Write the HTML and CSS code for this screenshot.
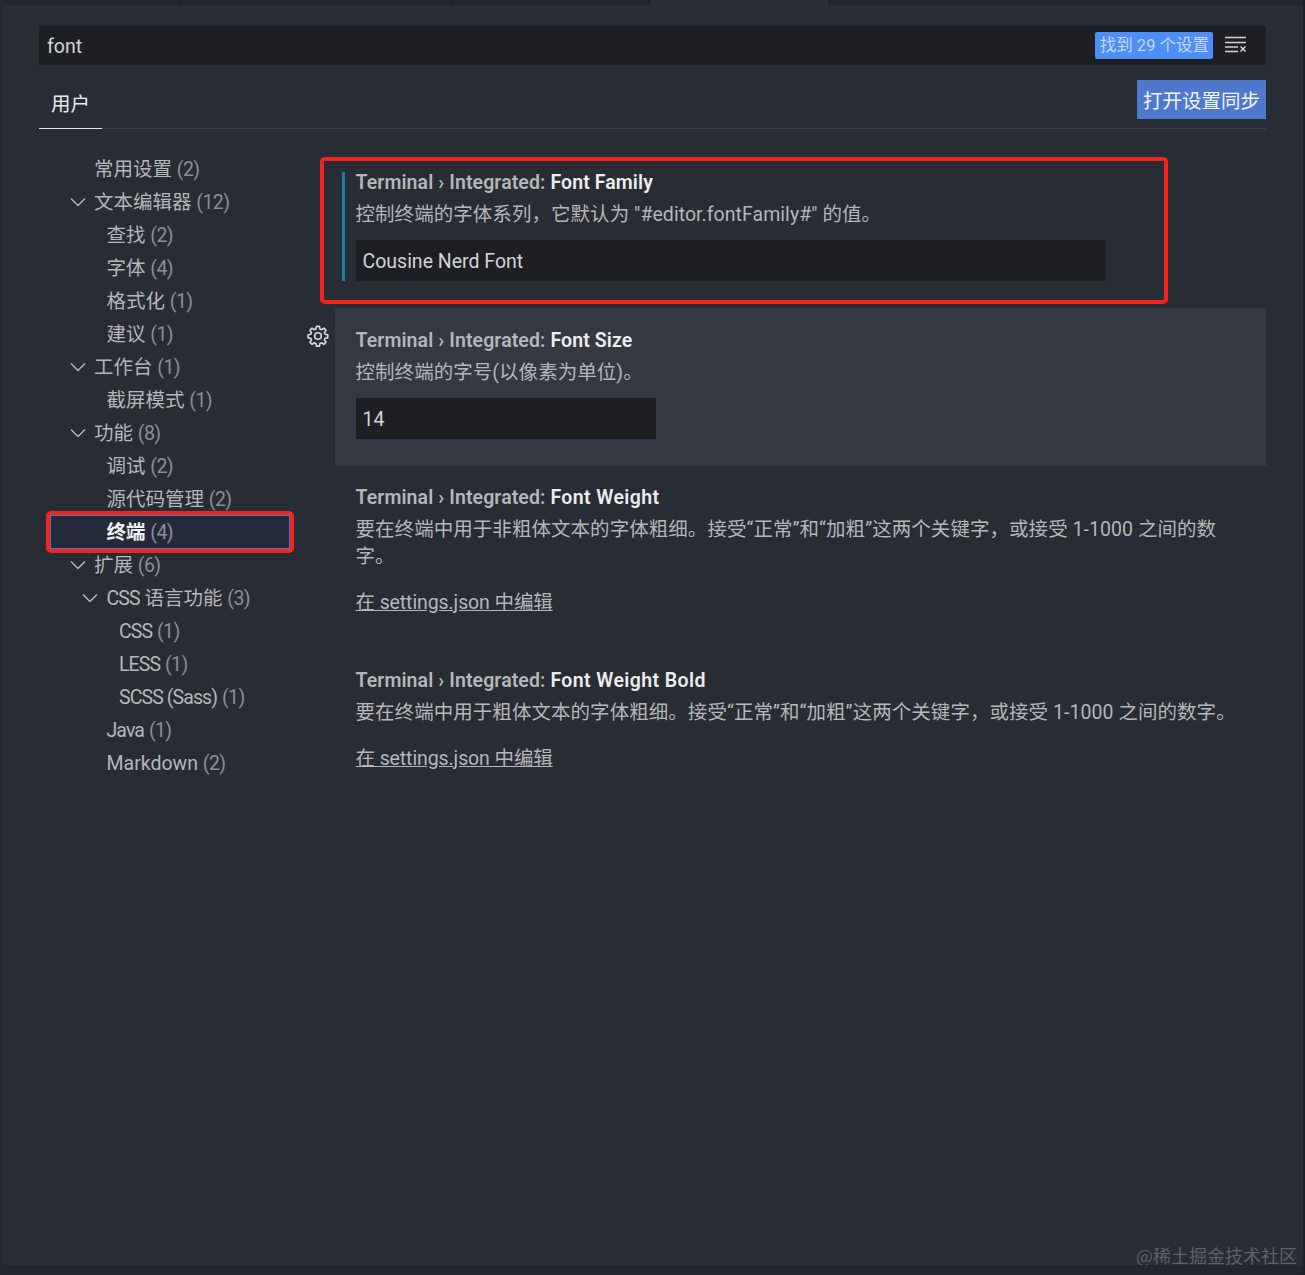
FILE: index.html
```html
<!DOCTYPE html>
<html lang="zh">
<head>
<meta charset="utf-8">
<title>Settings</title>
<link rel="stylesheet" href="styles.css">
</head>
<body>
<div class="tabstrip">
  <div class="tab t1"></div><div class="tab t2"></div><div class="tab t3"></div><div class="tab active"></div>
</div>
<main class="editor">
  <div class="search">
    <span class="query">font</span>
    <span class="count">找到 29 个设置</span>
    <svg class="clear" width="24" height="18" viewBox="0 0 24 18"><path d="M1 2.500h21M1 7.500h21M1 12h13M1 16.500h13" stroke="#d0d2d4" stroke-width="1.500" fill="none"/><path d="M16.500 11.500l5 5M21.500 11.500l-5 5" stroke="#d0d2d4" stroke-width="1.500" fill="none"/></svg>
  </div>
  <div class="tabs-row">
    <div class="user-tab">用户</div>
    <button class="sync">打开设置同步</button>
  </div>
  <div class="content">
    <nav class="tree">
      <div class="node l1"><span class="lab">常用设置</span> <span class="n">(2)</span></div>
      <div class="node l1"><svg class="chev" viewBox="0 0 16 16"><path d="M1 4.500l7 7 7-7"/></svg><span class="lab">文本编辑器</span> <span class="n">(12)</span></div>
      <div class="node l2"><span class="lab">查找</span> <span class="n">(2)</span></div>
      <div class="node l2"><span class="lab">字体</span> <span class="n">(4)</span></div>
      <div class="node l2"><span class="lab">格式化</span> <span class="n">(1)</span></div>
      <div class="node l2"><span class="lab">建议</span> <span class="n">(1)</span></div>
      <div class="node l1"><svg class="chev" viewBox="0 0 16 16"><path d="M1 4.500l7 7 7-7"/></svg><span class="lab">工作台</span> <span class="n">(1)</span></div>
      <div class="node l2"><span class="lab">截屏模式</span> <span class="n">(1)</span></div>
      <div class="node l1"><svg class="chev" viewBox="0 0 16 16"><path d="M1 4.500l7 7 7-7"/></svg><span class="lab">功能</span> <span class="n">(8)</span></div>
      <div class="node l2"><span class="lab">调试</span> <span class="n">(2)</span></div>
      <div class="node l2"><span class="lab">源代码管理</span> <span class="n">(2)</span></div>
      <div class="node l2 selected"><span class="lab">终端</span> <span class="n">(4)</span></div>
      <div class="node l1"><svg class="chev" viewBox="0 0 16 16"><path d="M1 4.500l7 7 7-7"/></svg><span class="lab">扩展</span> <span class="n">(6)</span></div>
      <div class="node l2"><svg class="chev" viewBox="0 0 16 16"><path d="M1 4.500l7 7 7-7"/></svg><span class="lab"><span class="tight">CSS</span> 语言功能</span> <span class="n">(3)</span></div>
      <div class="node l3"><span class="lab tight">CSS</span> <span class="n">(1)</span></div>
      <div class="node l3"><span class="lab tight">LESS</span> <span class="n">(1)</span></div>
      <div class="node l3"><span class="lab tight">SCSS (Sass)</span> <span class="n">(1)</span></div>
      <div class="node l2"><span class="lab tight">Java</span> <span class="n">(1)</span></div>
      <div class="node l2"><span class="lab">Markdown</span> <span class="n">(2)</span></div>
    </nav>
    <section class="settings">
      <article class="setting s1">
        <h3 class="title">Terminal › Integrated: <b>Font Family</b></h3>
        <p class="desc">控制终端的字体系列，它默认为 "#editor.fontFamily#" 的值。</p>
        <div class="input wide">Cousine Nerd Font</div>
      </article>
      <article class="setting s2 hovered">
        <svg class="gear" width="24" height="24" viewBox="0 0 24 24"><path d="M10.300 2.200h3.400l.5 2.900 1.800.7 2.400-1.700 2.400 2.400-1.700 2.400.7 1.800 2.900.5v3.400l-2.900.5-.7 1.800 1.700 2.400-2.400 2.400-2.400-1.700-1.800.7-.5 2.900h-3.400l-.5-2.900-1.800-.7-2.400 1.700-2.400-2.400 1.700-2.400-.7-1.800-2.900-.5v-3.400l2.900-.5.7-1.800-1.700-2.400 2.400-2.400 2.400 1.700 1.800-.7z" transform="translate(.9 .4) scale(.92)" fill="none" stroke="#d6d8da" stroke-width="1.800" stroke-linejoin="round"/><circle cx="12" cy="12" r="3.300" fill="none" stroke="#d6d8da" stroke-width="1.600"/></svg>
        <h3 class="title">Terminal › Integrated: <b>Font Size</b></h3>
        <p class="desc">控制终端的字号(以像素为单位)。</p>
        <div class="input narrow">14</div>
      </article>
      <article class="setting s3">
        <h3 class="title">Terminal › Integrated: <b class="wider">Font Weight</b></h3>
        <p class="desc">要在终端中用于非粗体文本的字体粗细。接受“正常”和“加粗”这两个关键字，或接受 1-1000 之间的数字。</p>
        <a class="edit">在 settings.json 中编辑</a>
      </article>
      <article class="setting s4">
        <h3 class="title">Terminal › Integrated: <b class="wider">Font Weight Bold</b></h3>
        <p class="desc">要在终端中用于粗体文本的字体粗细。接受“正常”和“加粗”这两个关键字，或接受 1-1000 之间的数字。</p>
        <a class="edit">在 settings.json 中编辑</a>
      </article>
    </section>
  </div>
</main>
<div class="mark box-a"></div>
<div class="mark box-b"></div>
<div class="watermark">@稀土掘金技术社区</div>
<div class="bottom"></div>
</body>
</html>
```
FILE: styles.css
```css
* { box-sizing: border-box; }
html, body { margin: 0; height: 100%; }
body {
  position: relative;
  width: 1305px;
  height: 1275px;
  overflow: hidden;
  background: #282c35;
  color: #b4b6b9;
  font-family: Roboto, "Noto Sans CJK SC", sans-serif;
  font-size: 19.500px;
  border-left: 2px solid #23262e;
  border-right: 2px solid #1d2026;
}
.tabstrip { display: flex; height: 5px; background: #22252c; }
.tab { height: 5px; border-right: 1px solid #191b20; }
.t1 { width: 178px; }
.t2 { width: 271px; margin-left: 1px; }
.t3 { width: 198px; }
.tab.active { width: 180px; background: #282c35; }
.editor { padding: 21px 37px 0 37px; }
.search {
  display: flex;
  align-items: center;
  height: 39px;
  padding: 0 18px 0 8px;
  background: #1d1f24;
}
.query { flex: 1; padding-top: 2px; color: #d3d4d6; font-size: 19.500px; }
.count {
  height: 27px;
  padding: 0 4px 0 5px;
  line-height: 27px;
  border-radius: 2px;
  background: #4d8ef7;
  color: #c6d9f7;
  font-size: 16.500px;
  white-space: nowrap;
}
.clear { margin: -3px 0 0 11px; flex: none; }
.tabs-row {
  display: flex;
  justify-content: space-between;
  height: 64px;
  border-bottom: 1px solid #3c404a;
}
.user-tab {
  width: 63px;
  height: 64px;
  padding: 26px 0 0 12px;
  border-bottom: 1px solid #e6e7e8;
  color: #e9eaeb;
  font-size: 19.500px;
  line-height: 27px;
}
.sync {
  width: 129px;
  height: 39px;
  margin-top: 15px;
  padding: 0;
  border: 0;
  background: #4e78cc;
  color: #f2f5fb;
  font: inherit;
  font-size: 19.500px;
}
.content { display: flex; padding-top: 23px; }
.tree { width: 296px; flex: none; }
.node {
  position: relative;
  height: 33px;
  line-height: 35px;
  white-space: nowrap;
  color: #b4b6b9;
}
.node .n { color: #8b8e93; letter-spacing: -.6px; }
.tight { letter-spacing: -.9px; }
.l1 { padding-left: 55px; }
.l2 { padding-left: 67.500px; }
.l3 { padding-left: 80px; }
.chev {
  position: absolute;
  top: 9px;
  width: 16px;
  height: 16px;
  fill: none;
  stroke: #b4b6b9;
  stroke-width: 1.500;
}
.l1 .chev { left: 31px; }
.l2 .chev { left: 43px; }
.selected {
  width: 240px;
  height: 34px;
  margin: 0 0 -1px 11px;
  padding-left: 56.500px;
  background: #252a3b;
  outline: 1px solid #4e78cc;
  outline-offset: -1px;
  color: #f0f1f2;
}
.selected .lab { font-weight: 700; color: #f0f1f2; }
.settings { flex: 1; min-width: 0; }
.setting { position: relative; padding-left: 20.500px; padding-right: 20px; }
.s1 { height: 156px; padding-top: 15px; }
.s1::before {
  content: "";
  position: absolute;
  left: 7px;
  top: 20px;
  width: 3px;
  height: 109px;
  background: #167f99;
}
.s2 { height: 158px; padding-top: 17px; background: #343842; }
.s3 { height: 184px; padding-top: 16px; }
.s4 { padding-top: 15px; }
.gear { position: absolute; left: -29px; top: 16px; }
.title {
  margin: 0;
  height: 33.500px;
  color: #b4b6b9;
  font-size: 19.500px;
  font-weight: 600;
  line-height: 32px;
  letter-spacing: .1px;
  white-space: nowrap;
}
.title b { color: #eceded; font-weight: 600; }
.title .wider { letter-spacing: .4px; }
.desc {
  margin: 0;
  width: 885px;
  line-height: 27px;
  letter-spacing: .05px;
}
.input {
  height: 41px;
  margin-top: 12.500px;
  padding-left: 7px;
  background: #1d1f24;
  color: #d3d4d6;
  line-height: 43px;
}
.wide { width: 750px; }
.narrow { width: 300px; }
.edit {
  display: inline-block;
  margin-top: 19.500px;
  color: #b4b6b9;
  text-decoration: underline;
  line-height: 27px;
  letter-spacing: -.1px;
}
.mark {
  position: absolute;
  border: 4px solid #f3241c;
  border-radius: 5px;
  pointer-events: none;
}
.box-a { left: 318px; top: 157px; width: 848px; height: 147px; }
.box-b { left: 44px; top: 511px; width: 248px; height: 42px; }
.watermark {
  position: absolute;
  right: 6px;
  top: 1243px;
  color: #5d6068;
  font-family: "Noto Sans CJK SC", sans-serif;
  font-size: 18px;
  line-height: 24px;
}
.bottom {
  position: absolute;
  left: 0;
  right: 0;
  bottom: 0;
  height: 10px;
  background: #22252c;
}
```
